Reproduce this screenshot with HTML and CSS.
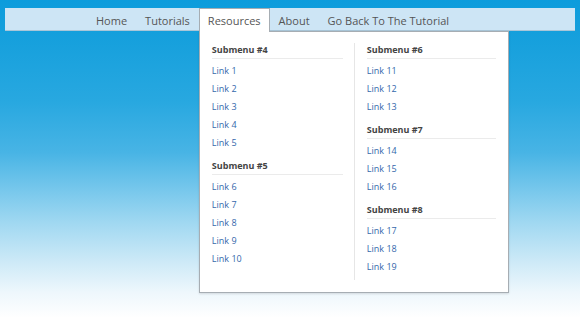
FILE: index.html
```html
<!DOCTYPE html>
<html lang="en">
<head>
  <meta charset="UTF-8" />
  <title>Mega Menu</title>
  <link rel="stylesheet" href="styles.css">
</head>
<body>

<nav class="menubar">
  <ul class="menu">
    <li><a href="#">Home</a></li>
    <li><a href="#">Tutorials</a></li>
    <li class="open">
      <a href="#">Resources</a>
      <div class="dropdown">
        <div class="col">
          <h3>Submenu #4</h3>
          <a href="#">Link 1</a>
          <a href="#">Link 2</a>
          <a href="#">Link 3</a>
          <a href="#">Link 4</a>
          <a href="#">Link 5</a>
          <h3>Submenu #5</h3>
          <a href="#">Link 6</a>
          <a href="#">Link 7</a>
          <a href="#">Link 8</a>
          <a href="#">Link 9</a>
          <a href="#">Link 10</a>
        </div>
        <div class="col">
          <h3>Submenu #6</h3>
          <a href="#">Link 11</a>
          <a href="#">Link 12</a>
          <a href="#">Link 13</a>
          <h3>Submenu #7</h3>
          <a href="#">Link 14</a>
          <a href="#">Link 15</a>
          <a href="#">Link 16</a>
          <h3>Submenu #8</h3>
          <a href="#">Link 17</a>
          <a href="#">Link 18</a>
          <a href="#">Link 19</a>
        </div>
      </div>
    </li>
    <li><a href="#">About</a></li>
    <li><a href="#">Go Back To The Tutorial</a></li>
  </ul>
</nav>

</body>
</html>
```

FILE: styles.css
```css
* { margin: 0; padding: 0; box-sizing: border-box; }

html, body { height: 100%; }

body {
  font-family: "Open Sans", sans-serif;
  background: linear-gradient(to bottom, #0c9cdc 0%, #149fdc 10%, #28a8e0 32%, #48b4e5 48%, #78c8ec 60%, #a0d8f1 70%, #cce9f7 82%, #eef7fc 92%, #ffffff 100%);
  padding: 8px 5px 0;
}

.menubar {
  background: #cde5f5;
  border-bottom: 1px solid #a9c6d8;
  height: 23px;
}

.menu {
  list-style: none;
  display: flex;
  padding-left: 82px;
}

.menu > li {
  position: relative;
}

.menu > li > a {
  display: block;
  padding: 0 8px;
  height: 23px;
  line-height: 23px;
  font-size: 11px;
  color: #555;
  text-decoration: none;
  border: 1px solid transparent;
  border-bottom: none;
}

.menu > li.open > a {
  background: #fff;
  border-color: #a6adb3;
  height: 24px;
  position: relative;
  z-index: 2;
}

.dropdown {
  position: absolute;
  top: 23px;
  left: 0;
  width: 310px;
  background: #fff;
  border: 1px solid #a6adb3;
  box-shadow: 0 1px 2px rgba(0, 0, 0, 0.12);
  padding: 11px 12px 12px;
  display: grid;
  grid-template-columns: 1fr 1fr;
  z-index: 1;
}

.col:first-child {
  padding-right: 11px;
}

.col + .col {
  border-left: 1px solid #e6e6e6;
  padding-left: 12px;
  padding-bottom: 4px;
}

.col h3 {
  font-size: 9px;
  font-weight: bold;
  color: #444;
  line-height: 14px;
  padding-bottom: 1px;
  border-bottom: 1px solid #ebebeb;
  margin: 7px 0 3px;
}

.col h3:first-child {
  margin-top: 0;
}

.col a {
  display: block;
  font-size: 9px;
  line-height: 18px;
  color: #3468ab;
  text-decoration: none;
}
```
